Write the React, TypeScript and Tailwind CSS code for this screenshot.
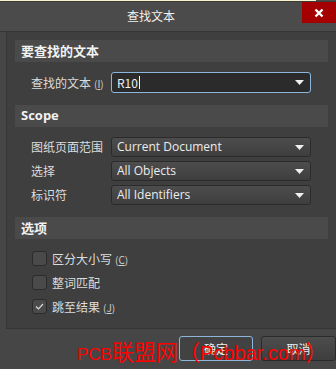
import React from "react";

const font = { fontFamily: '"Noto Sans CJK SC", "Noto Sans", sans-serif' };

function Caret() {
  return (
    <svg width="9" height="5" viewBox="0 0 9 5" className="shrink-0">
      <path d="M0 0 H9 L4.5 5 Z" fill="#f0f0f0" />
    </svg>
  );
}

function Dropdown({ value }: { value: string }) {
  return (
    <div className="flex h-[20px] w-[200px] items-center justify-between rounded-[3px] border border-[#2b2b2b] bg-gradient-to-b from-[#4d4d4d] to-[#3e3e3e] pl-[5px] pr-[6px]">
      <span className="text-[12px] leading-none text-[#ececec]">{value}</span>
      <Caret />
    </div>
  );
}

function Header({ children }: { children: React.ReactNode }) {
  return (
    <div className="flex h-[22px] items-center bg-[#4a4a4a] pl-[6px] text-[13px] font-bold text-[#f2f2f2]">
      {children}
    </div>
  );
}

function Row({ label, children }: { label: React.ReactNode; children: React.ReactNode }) {
  return (
    <div className="flex items-center">
      <div className="w-[96px] shrink-0 whitespace-nowrap pl-[16px] text-[12px] leading-none text-[#dcdcdc]">{label}</div>
      {children}
    </div>
  );
}

function Check({ checked, label }: { checked?: boolean; label: React.ReactNode }) {
  return (
    <div className="flex h-[15px] items-center pl-[17px]">
      <div className="flex h-[15px] w-[15px] items-center justify-center rounded-[3px] border border-[#2b2b2b] bg-[#4a4a4a]">
        {checked && (
          <svg width="9" height="7" viewBox="0 0 9 7">
            <path d="M1 3.5 L3.5 6 L8 1" stroke="#d8d8d8" strokeWidth="1.2" fill="none" />
          </svg>
        )}
      </div>
      <span className="ml-[5px] text-[12px] leading-none text-[#dcdcdc]">{label}</span>
    </div>
  );
}

function Mn({ c }: { c: string }) {
  return (
    <span className="ml-[3px] text-[10px] text-[#cfcfcf]">
      (<span className="underline">{c}</span>)
    </span>
  );
}

export default function App() {
  return (
    <div className="relative h-[369px] w-[336px] overflow-hidden bg-[#464646]" style={font}>
      {/* title bar */}
      <div className="relative h-[31px] bg-[#4b4b4b]">
        <div className="absolute left-0 top-0 h-[1px] w-[316px] bg-[#f7f2cc]" />
        <div className="absolute left-0 top-[1px] h-[1px] w-[336px] bg-[#3a3a3a]" />
        <div className="flex h-full">
          <div className="flex flex-1 items-center justify-center pt-[1px] text-[12px] text-[#f0f0f0]">查找文本</div>
          <div className="mt-[2px] flex h-[21px] w-[34px] items-center justify-center bg-[#a40000]">
            <svg width="10" height="10" viewBox="0 0 10 10">
              <path d="M1.5 1.5 L8.5 8.5 M8.5 1.5 L1.5 8.5" stroke="#fff" strokeWidth="2.4" />
            </svg>
          </div>
        </div>
      </div>
      <div className="h-[1px] bg-[#363636]" />

      {/* panel */}
      <div className="ml-[6px] w-[331px] border-l border-[#353535] bg-[#3f3f3f] pb-[14px] pl-[8px] pr-[9px] pt-[8px]">
        <Header>要查找的文本</Header>
        <div className="mt-[10px]">
          <Row
            label={
              <span>
                查找的文本<Mn c="I" />
              </span>
            }
          >
            <div className="flex h-[21px] w-[200px] items-center justify-between rounded-[3px] border border-[#8db6dc] bg-[#2b2b2b] pl-[5px] pr-[6px]">
              <span className="flex items-center text-[12px] leading-none text-[#f0f0f0]">
                R10<span className="ml-[1px] inline-block h-[13px] w-[1px] bg-[#f0f0f0]" />
              </span>
              <Caret />
            </div>
          </Row>
        </div>

        <div className="mt-[12px]">
          <Header>
            <span style={{ fontFamily: '"Open Sans", "Noto Sans", sans-serif' }}>Scope</span>
          </Header>
        </div>
        <div className="mt-[10px] flex flex-col gap-[4px]" style={{ fontFamily: '"Open Sans", "Noto Sans CJK SC", sans-serif' }}>
          <Row label={<span style={font}>图纸页面范围</span>}>
            <Dropdown value="Current Document" />
          </Row>
          <Row label={<span style={font}>选择</span>}>
            <Dropdown value="All Objects" />
          </Row>
          <Row label={<span style={font}>标识符</span>}>
            <Dropdown value="All Identifiers" />
          </Row>
        </div>

        <div className="mt-[12px]">
          <Header>选项</Header>
        </div>
        <div className="mt-[12px] flex flex-col gap-[9px]">
          <Check label={<>区分大小写<Mn c="C" /></>} />
          <Check label="整词匹配" />
          <Check checked label={<>跳至结果<Mn c="J" /></>} />
        </div>
      </div>
      <div className="ml-[6px] h-[1px] w-[331px] bg-[#353535]" />

      {/* buttons */}
      <div className="mt-[7px] flex pl-[179px]">
        <div className="flex h-[25px] w-[75px] items-center justify-center rounded-[3px] border border-[#8db6dc] bg-[#424242] text-[12px] text-[#eeeeee]">
          确定
        </div>
        <div className="ml-[8px] flex h-[25px] w-[76px] items-center justify-center rounded-[3px] border border-[#2b2b2b] bg-gradient-to-b from-[#4d4d4d] to-[#3e3e3e] text-[12px] text-[#eeeeee]">
          取消
        </div>
      </div>

      {/* watermark */}
      <div
        className="pointer-events-none absolute left-[77px] top-[339px] flex items-baseline whitespace-nowrap leading-none text-[#ff0000]"
        style={{ fontFamily: '"Liberation Sans", "Noto Sans CJK SC", sans-serif' }}
      >
        <span className="text-[17px]">PCB</span>
        <span className="text-[22px]" style={font}>联盟网（</span>
        <span className="text-[20px]">Pcbbar.com</span>
        <span className="text-[22px]" style={font}>）</span>
      </div>
    </div>
  );
}
